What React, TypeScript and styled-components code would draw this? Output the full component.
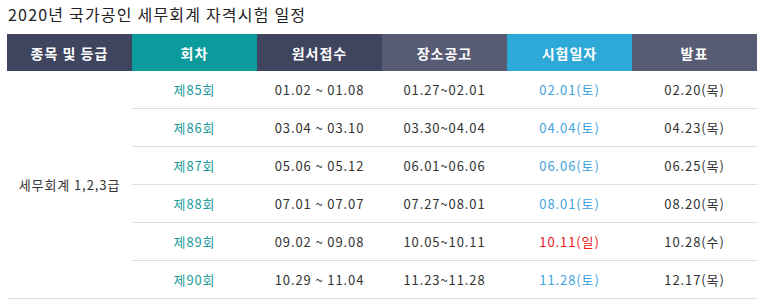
import React from 'react';
import styled, { createGlobalStyle } from 'styled-components';

const GlobalStyle = createGlobalStyle`
  body {
    margin: 0;
    background: #fff;
    font-family: 'Noto Sans CJK KR', 'Noto Sans', sans-serif;
  }
`;

type Tone = 'navy' | 'teal' | 'slate' | 'sky';
type DayTone = 'sat' | 'sun';

const headTones: Record<Tone, string> = {
  navy: '#3f455f',
  teal: '#0b9b9c',
  slate: '#575b73',
  sky: '#2ea8d7',
};

const heads: { label: string; tone: Tone }[] = [
  { label: '종목 및 등급', tone: 'navy' },
  { label: '회차', tone: 'teal' },
  { label: '원서접수', tone: 'navy' },
  { label: '장소공고', tone: 'slate' },
  { label: '시험일자', tone: 'sky' },
  { label: '발표', tone: 'slate' },
];

const rounds: {
  no: string;
  apply: string;
  notice: string;
  exam: string;
  day: DayTone;
  result: string;
}[] = [
  { no: '제85회', apply: '01.02 ~ 01.08', notice: '01.27~02.01', exam: '02.01(토)', day: 'sat', result: '02.20(목)' },
  { no: '제86회', apply: '03.04 ~ 03.10', notice: '03.30~04.04', exam: '04.04(토)', day: 'sat', result: '04.23(목)' },
  { no: '제87회', apply: '05.06 ~ 05.12', notice: '06.01~06.06', exam: '06.06(토)', day: 'sat', result: '06.25(목)' },
  { no: '제88회', apply: '07.01 ~ 07.07', notice: '07.27~08.01', exam: '08.01(토)', day: 'sat', result: '08.20(목)' },
  { no: '제89회', apply: '09.02 ~ 09.08', notice: '10.05~10.11', exam: '10.11(일)', day: 'sun', result: '10.28(수)' },
  { no: '제90회', apply: '10.29 ~ 11.04', notice: '11.23~11.28', exam: '11.28(토)', day: 'sat', result: '12.17(목)' },
];

const App: React.FC = () => (
  <>
    <GlobalStyle />
    <Wrap>
      <Title>2020년 국가공인 세무회계 자격시험 일정</Title>
      <Table>
        <colgroup>
          {heads.map(h => (
            <col key={h.label} style={{ width: 125 }} />
          ))}
        </colgroup>
        <thead>
          <tr>
            {heads.map(h => (
              <Head key={h.label} $tone={h.tone}>
                {h.label}
              </Head>
            ))}
          </tr>
        </thead>
        <tbody>
          {rounds.map((r, i) => (
            <Row key={r.no}>
              {i === 0 && <Subject rowSpan={rounds.length}>세무회계 1,2,3급</Subject>}
              <Round>{r.no}</Round>
              <Cell>{r.apply}</Cell>
              <Cell>{r.notice}</Cell>
              <Exam $day={r.day}>{r.exam}</Exam>
              <Cell>{r.result}</Cell>
            </Row>
          ))}
        </tbody>
      </Table>
    </Wrap>
  </>
);

export default App;

const Wrap = styled.div`
  padding: 3px 8px 0 7px;
`;

const Title = styled.h2`
  margin: 0 0 9px 1px;
  font-size: 16px;
  line-height: 22px;
  font-weight: 400;
  letter-spacing: 1.2px;
  color: #222;
`;

const Table = styled.table`
  width: 750px;
  border-collapse: collapse;
  table-layout: fixed;
`;

const Head = styled.th<{ $tone: Tone }>`
  height: 37px;
  padding: 0;
  background: ${p => headTones[p.$tone]};
  color: #fff;
  font-size: 14px;
  font-weight: 700;
  letter-spacing: 1px;
  text-align: center;
`;

const Row = styled.tr`
  border-bottom: 1px solid #dedede;
`;

const Cell = styled.td`
  height: 37px;
  padding: 0;
  text-align: center;
  font-size: 13px;
  letter-spacing: 0.9px;
  color: #333;
`;

const Subject = styled(Cell)`
  border-bottom: 1px solid #dedede;
`;

const Round = styled(Cell)`
  color: #1a9c9d;
`;

const Exam = styled(Cell)<{ $day: DayTone }>`
  color: ${p => (p.$day === 'sun' ? '#f01818' : '#3fa3db')};
`;
